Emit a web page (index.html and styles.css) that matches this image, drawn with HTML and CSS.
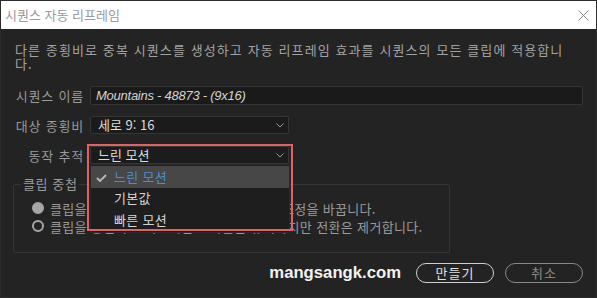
FILE: index.html
```html
<!DOCTYPE html>
<html lang="ko">
<head>
<meta charset="utf-8">
<link rel="stylesheet" href="styles.css">
</head>
<body>
<div class="window">
  <div class="titlebar">
    <span class="title">시퀀스 자동 리프레임</span>
    <svg class="close" width="11" height="11" viewBox="0 0 11 11"><path d="M0.5 0.5 L10.5 10.5 M10.5 0.5 L0.5 10.5" stroke="#8a8a8a" stroke-width="1" fill="none"/></svg>
  </div>
  <div class="content">
    <p class="desc">다른 종횡비로 중복 시퀀스를 생성하고 자동 리프레임 효과를 시퀀스의 모든 클립에 적용합니<br>다.</p>
    <div class="form">
      <div class="row">
        <label class="label">시퀀스 이름</label>
        <div class="input">Mountains - 48873 - (9x16)</div>
      </div>
      <div class="row">
        <label class="label">대상 종횡비</label>
        <div class="select"><span>세로 9: 16</span><svg class="chev" width="8" height="5" viewBox="0 0 8 5"><polyline points="0.5,0.5 4,4 7.5,0.5" fill="none" stroke="#9a9a9a" stroke-width="1"/></svg></div>
      </div>
      <div class="row">
        <label class="label">동작 추적</label>
        <div class="select open"><span>느린 모션</span><svg class="chev" width="8" height="5" viewBox="0 0 8 5"><polyline points="0.5,0.5 4,4 7.5,0.5" fill="none" stroke="#9a9a9a" stroke-width="1"/></svg>
          <ul class="menu">
            <li class="item active"><svg class="check" width="11" height="8" viewBox="0 0 11 8"><polyline points="1,4 4,7 10,1" fill="none" stroke="#b4b4b4" stroke-width="2"/></svg>느린 모션</li>
            <li class="item">기본값</li>
            <li class="item">빠른 모션</li>
          </ul>
          <div class="highlight"></div>
        </div>
      </div>
    </div>
    <fieldset class="group">
      <legend>클립 중첩</legend>
      <div class="radio"><span class="dot on"></span>클립을 중첩하지 않고 클립의 위치와 크기 조정을 바꿉니다.</div>
      <div class="radio r2"><span class="dot"></span>클립을 중첩하고 키프레임 효과들은 유지하지만 전환은 제거합니다.</div>
    </fieldset>
    <div class="footer">
      <span class="brand">mangsangk.com</span>
      <button class="btn primary">만들기</button>
      <button class="btn">취소</button>
    </div>
  </div>
</div>
</body>
</html>
```
FILE: styles.css
```css
* { box-sizing: border-box; }
html, body { margin: 0; padding: 0; background: #232323; }
body { font-family: "Noto Sans CJK KR", "Noto Sans", sans-serif; }
.window {
  width: 597px; height: 298px;
  border: 1px solid #2c2c2c;
  background: #232323;
  display: flex; flex-direction: column;
  overflow: hidden;
}
.titlebar {
  height: 28px; background: #ffffff;
  display: flex; align-items: center; justify-content: space-between;
  padding: 0 7px 0 4px;
}
.title { color: #9a9a9a; font-size: 13px; line-height: 14px; }
.close { display: block; }
.content { padding: 0 13px 0 14px; display: flex; flex-direction: column; }
.desc {
  margin: 14px 0 9px; color: #a2a2a2; font-size: 13px; line-height: 14px;
  letter-spacing: 1.1px; white-space: nowrap;
}
.form { display: flex; flex-direction: column; }
.row { height: 30px; display: flex; align-items: center; gap: 6px; }
.label {
  width: 69px; text-align: right; color: #9a9a9a; font-size: 13px;
  letter-spacing: 0.8px; white-space: nowrap;
}
.input {
  width: 493px; height: 19px; background: #1a1a1a;
  border: 1px solid #353535; border-radius: 2px;
  color: #d2d2d2; font-family: "Liberation Sans", Arial, sans-serif; font-style: italic;
  font-size: 13px; line-height: 17px; padding-left: 5px; letter-spacing: -0.25px;
}
.select {
  position: relative;
  width: 199px; height: 18px; background: #1b1b1b;
  border: 1px solid #353535; border-radius: 2px;
  display: flex; align-items: center; justify-content: space-between;
  padding: 0 4px 0 7px;
  color: #dcdcdc; font-size: 13px; line-height: 16px;
}
.chev { display: block; }
.select.open { background: #1c1c1c; }
.menu {
  position: absolute; left: -1px; top: 17px; width: 200px;
  margin: 0; padding: 1px 0 1px; list-style: none;
  background: #1e1e1e; border: 1px solid #2a2a2a; z-index: 2;
}
.item {
  height: 21.5px; display: flex; align-items: center;
  padding-left: 23px; color: #d4d4d4; font-size: 13px; position: relative;
  letter-spacing: 0.3px;
}
.item.active { background: #474747; color: #4c8dd6; }
.check { position: absolute; left: 5px; top: 8px; }
.highlight {
  position: absolute; left: -4px; top: -3px; width: 206px; height: 87px;
  border: 2px solid #e06262; z-index: 3; pointer-events: none;
}
.group {
  margin: 7px 0 0 -2px; width: 437px; height: 76px;
  border: 1px solid #353535; border-radius: 2px;
  padding: 8px 0 0 7px;
}
.group legend { padding: 0 2px; color: #9a9a9a; font-size: 13px; line-height: 14px; letter-spacing: 0.6px; }
.radio {
  margin-left: 11px; height: 18px; display: flex; align-items: center; gap: 6px;
  color: #9a9a9a; font-size: 13px; white-space: nowrap; letter-spacing: 0.3px;
}
.radio.r2 { letter-spacing: 0.35px; }
.dot { width: 12px; height: 12px; border-radius: 50%; border: 2px solid #a6a6a6; flex: none; }
.dot.on { background: #a6a6a6; }
.footer {
  margin-top: 10px; display: flex; justify-content: flex-end; align-items: center; gap: 11px;
}
.brand {
  font-family: "Liberation Sans", Arial, sans-serif; font-weight: bold; font-size: 16.7px;
  color: #f2f2f2; margin-right: 4px;
}
.btn {
  width: 78px; height: 20px; border-radius: 10px; background: transparent;
  border: 1px solid #8a8a8a; color: #8c8c8c; font-family: inherit; font-size: 13px;
  padding: 0; line-height: 16px; letter-spacing: 1px;
}
.btn.primary { border-color: #cfcfcf; color: #e0e0e0; }
```
